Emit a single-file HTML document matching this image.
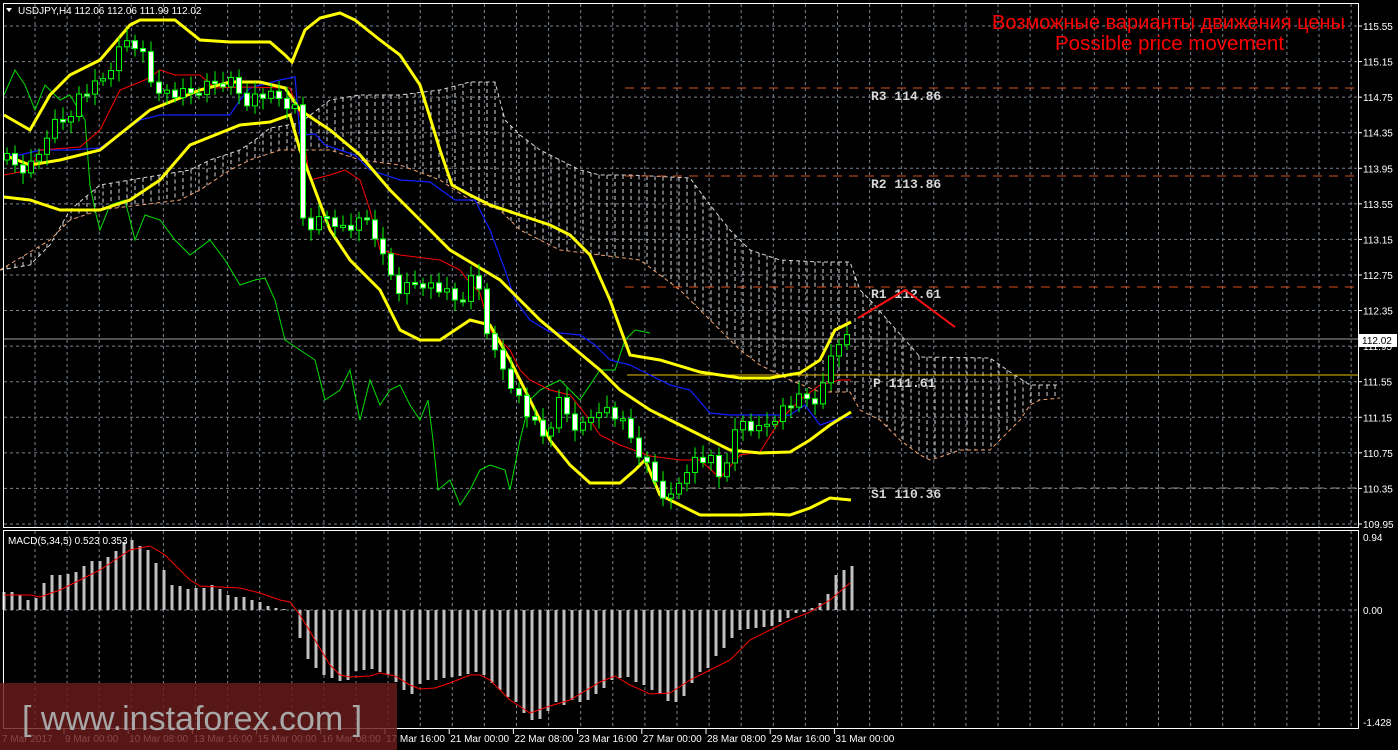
<!DOCTYPE html>
<html><head><meta charset="utf-8"><style>
html,body{margin:0;padding:0;background:#000;overflow:hidden}
svg{display:block}
text{font-family:"Liberation Sans",sans-serif}
text.mono{font-family:"Liberation Mono",monospace}
</style></head><body>
<svg id="s" width="1398" height="750" xmlns="http://www.w3.org/2000/svg">
<rect width="1398" height="750" fill="#000"/>
<g id="grid"></g>
<g id="cloud"></g>
<g id="levels">
<line x1="625" y1="88" x2="1358" y2="88" stroke="#d8501c" stroke-width="1" stroke-dasharray="9,7"/>
<line x1="625" y1="176" x2="1358" y2="176" stroke="#d8501c" stroke-width="1" stroke-dasharray="9,7"/>
<line x1="625" y1="287" x2="1358" y2="287" stroke="#d8501c" stroke-width="1" stroke-dasharray="9,7"/>
<line x1="627" y1="488" x2="1358" y2="488" stroke="#a08888" stroke-width="1" stroke-dasharray="9,7"/>
<line x1="627" y1="375" x2="1358" y2="375" stroke="#e8c000" stroke-width="1"/>
<line x1="3" y1="339" x2="1358" y2="339" stroke="#a0a0a0" stroke-width="1"/>
</g>
<g id="lines"></g>
<g id="candles"></g>
<g id="macd"></g>
<g font-size="13" font-weight="bold" fill="#d8d8d8">
<text class="mono" x="871" y="100">R3 114.86</text>
<text class="mono" x="871" y="188">R2 113.86</text>
<text class="mono" x="871" y="298">R1 112.61</text>
<text class="mono" x="873" y="387">P 111.61</text>
<text class="mono" x="871" y="498">S1 110.36</text>
</g>
<polyline points="858,318 905,290 955,327" fill="none" stroke="#ff1010" stroke-width="2"/>
<text x="992" y="29" font-size="20" fill="#ff0000">Возможные варианты движения цены</text>
<text x="1055" y="50" font-size="20.5" fill="#ff0000">Possible price movement</text>
<rect x="1359" y="0" width="39" height="750" fill="#000"/>
<g fill="none" stroke="#fff" stroke-width="1">
<rect x="3.5" y="3.5" width="1355" height="524"/>
<rect x="3.5" y="530.5" width="1355" height="198"/>
</g>
<g id="axis" font-size="10" fill="#fff"></g>
<rect x="1359" y="334" width="38" height="13" fill="#fff"/>
<text x="1362" y="344" font-size="10" fill="#000">112.02</text>
<text x="18" y="14" font-size="10" fill="#fff">USDJPY,H4  112.06 112.06 111.99 112.02</text>
<polygon points="6,8 12,8 9,12" fill="#fff"/>
<text x="8" y="544" font-size="10" fill="#fff">MACD(5,34,5) 0.523 0.353</text>
<rect x="0" y="683" width="397" height="67" fill="#6a1c1c" opacity="0.82"/>
<text x="22" y="730" font-size="34" fill="#a8a8a8">[  www.instaforex.com  ]</text>
</svg>
<script>
const NS="http://www.w3.org/2000/svg";
function el(p,t,a){const e=document.createElementNS(NS,t);for(const k in a)e.setAttribute(k,a[k]);document.getElementById(p).appendChild(e);return e;}
function interp(pts,x){if(x<=pts[0][0])return pts[0][1];for(let i=1;i<pts.length;i++){if(x<=pts[i][0]){const a=pts[i-1],b=pts[i];return a[1]+(b[1]-a[1])*(x-a[0])/(b[0]-a[0]);}}return pts[pts.length-1][1];}
function pl(p,pts,c,w,dash){const a={points:pts.map(q=>q.join(',')).join(' '),fill:'none',stroke:c,'stroke-width':w};if(dash)a['stroke-dasharray']=dash;el(p,'polyline',a);}
for(let x=35;x<1358;x+=32.1){el('grid','line',{x1:x,y1:4,x2:x,y2:527,stroke:'#7a8490','stroke-dasharray':'3,3'});el('grid','line',{x1:x,y1:531,x2:x,y2:728,stroke:'#7a8490','stroke-dasharray':'3,3'});}
for(let i=0;i<15;i++){const y=26+i*35.57;el('grid','line',{x1:4,y1:y,x2:1358,y2:y,stroke:'#7a8490','stroke-dasharray':'3,3'});}
el('grid','line',{x1:4,y1:610,x2:1358,y2:610,stroke:'#7a8490','stroke-dasharray':'3,3'});
const up=[[0,270],[30,265],[50,245],[70,210],[100,185],[130,180],[160,175],[190,170],[210,160],[240,150],[255,140],[270,128],[300,123],[330,100],[360,95],[400,95],[440,90],[470,82],[495,82],[505,120],[520,135],[540,150],[560,160],[580,170],[600,175],[630,175],[690,178],[710,205],[730,230],[750,250],[780,260],[820,262],[850,262],[860,290],[870,300],[920,357],[990,358],[1010,372],[1030,385],[1060,385]];
const lo=[[0,270],[50,240],[70,220],[100,210],[140,205],[180,200],[200,190],[230,170],[250,160],[280,150],[330,150],[360,160],[400,165],[440,180],[470,200],[500,210],[520,230],[560,250],[600,255],[640,260],[680,290],[700,310],[740,350],[760,365],[790,380],[820,392],[850,392],[860,410],[880,420],[900,440],[920,455],[930,460],[940,457],[960,450],[990,450],[1000,440],[1010,430],[1020,420],[1030,405],[1040,400],[1060,398]];
for(let x=7;x<=1060;x+=8){const a=interp(up,x),b=interp(lo,x);if(Math.abs(a-b)>3)el('cloud','line',{x1:x,y1:a,x2:x,y2:b,stroke:'#d8d8d8','stroke-dasharray':'4,3','stroke-width':1});}
pl('cloud',up,'#d8d8d8',1,'4,3');pl('cloud',lo,'#f0a070',1,'4,3');
const ub=[[4,115],[30,130],[50,95],[70,75],[100,60],[130,25],[140,20],[175,20],[200,40],[230,42],[270,42],[285,55],[292,62],[305,30],[320,18],[340,13],[355,20],[380,40],[400,55],[420,85],[440,150],[452,185],[470,195],[490,205],[520,215],[550,225],[570,235],[590,255],[610,300],[630,355],[660,360],[700,372],[740,378],[770,378],[800,373],[820,360],[835,330],[851,322]];
const mb=[[4,155],[30,165],[60,160],[100,150],[150,110],[200,90],[230,82],[260,82],[285,88],[300,110],[330,130],[360,155],[390,190],[420,220],[450,250],[470,262],[500,280],[520,300],[540,320],[570,345],[600,370],[620,390],[650,410],[680,425],[700,435],[730,450],[760,453],[790,452],[810,440],[830,425],[851,412]];
const lb=[[4,197],[30,200],[60,210],[100,210],[130,200],[160,180],[190,145],[210,137],[240,125],[270,122],[290,115],[300,150],[315,190],[330,230],[350,260],[380,290],[400,330],[420,340],[440,340],[455,330],[470,320],[490,325],[510,360],[530,400],[550,440],[570,465],[590,483],[620,483],[635,470],[645,460],[660,495],[680,505],[700,515],[740,515],[770,514],[790,515],[810,508],[830,498],[851,500]];
const green=[[4,95],[15,70],[25,85],[35,110],[45,85],[60,100],[70,95],[85,120],[90,185],[95,210],[100,230],[110,205],[125,200],[135,240],[145,215],[160,220],[175,240],[190,255],[210,240],[225,260],[240,285],[255,280],[265,278],[275,300],[285,340],[300,350],[315,360],[325,400],[340,390],[350,370],[360,420],[370,380],[380,405],[390,390],[400,385],[410,405],[420,420],[428,400],[433,440],[438,490],[450,480],[460,505],[470,490],[480,470],[490,465],[505,470],[510,490],[520,440],[530,400],[540,390],[550,385],[560,380],[575,395],[580,400],[600,370],[615,370],[625,340],[635,330],[650,333]];
const red=[[4,175],[30,170],[40,150],[80,147],[100,130],[120,90],[145,80],[160,70],[175,75],[200,75],[215,88],[245,87],[290,88],[300,115],[310,180],[330,175],[345,170],[360,180],[370,210],[380,250],[400,255],[440,260],[460,270],[470,283],[480,293],[490,330],[510,350],[520,370],[530,380],[550,390],[570,395],[590,420],[600,435],[620,445],[650,456],[680,460],[700,460],[720,478],[740,455],[760,452],[780,420],[800,400],[820,385],[840,380],[851,380]];
const blue=[[4,155],[20,155],[40,150],[70,150],[100,148],[140,120],[160,115],[230,115],[240,100],[250,88],[280,80],[295,77],[300,135],[315,134],[325,145],[340,150],[355,155],[370,170],[400,180],[430,182],[455,200],[475,200],[490,230],[505,270],[515,300],[530,320],[550,332],[580,335],[595,345],[610,360],[630,365],[650,375],[670,385],[690,390],[710,413],[730,415],[790,415],[805,405],[820,425],[840,418],[851,417]];
pl('lines',green,'#00e000',1);pl('lines',blue,'#1020ff',1.2);pl('lines',red,'#ff0000',1);
pl('lines',ub,'#ffff00',3);pl('lines',mb,'#ffff00',3);pl('lines',lb,'#ffff00',3);
const cl=[[7,160],[20,170],[35,165],[50,125],[65,120],[80,95],[100,85],[115,60],[125,40],[140,45],[150,80],[170,95],[190,95],[210,85],[230,80],[245,100],[260,95],[280,100],[295,110],[300,215],[310,225],[330,215],[345,230],[370,220],[385,265],[400,290],[420,280],[440,290],[460,305],[470,280],[480,290],[490,345],[510,380],[530,420],[545,440],[560,400],[570,420],[580,430],[600,405],[620,420],[640,455],[660,490],[670,500],[690,460],[710,460],[720,480],[740,420],[760,430],[780,410],[800,400],[820,400],[835,340],[851,338]];
let prev=interp(cl,0);
for(let i=0;i<=106;i++){const x=7+8*i;if(x>852)break;let c=interp(cl,x)+((i*37)%11-5)*1.3;const o=prev;prev=c;
const top=Math.min(o,c),bot=Math.max(o,c);const h=Math.max(bot-top,2);
el('candles','line',{x1:x,y1:top-6-(i%4)*2,x2:x,y2:bot+5+(i%3)*3,stroke:'#00ff00','stroke-width':1});
el('candles','rect',{x:x-2.5,y:top,width:5,height:h,fill:(c>o?'#fff':'#000'),stroke:'#00ff00','stroke-width':1});}
const mh={4:592,12:592,20:595,28:600,36:598,44:583,52:575,60:575,68:574,76:572,84:566,92:561,100:561,108:557,116:551,124:542,132:540,140:546,148:550,156:563,164:570,172:585,180:586,188:589,196:588,204:588,212:585,220:589,228:595,236:597,244:597,252:600,260:602,268:606,276:608,284:609,300:638,308:659,316:668,324:675,332:678,340:681,348:680,356:671,364:670,372:669,380:672,388:675,396:682,404:690,412:694,420:684,428:680,436:680,444:678,452:677,460:676,468:674,476:672,484:675,492:683,500:690,508:697,516:702,524:713,532:720,540:719,548:711,556:702,564:705,572:700,580:702,588:700,596:694,604:688,612:680,620:678,628:677,636:682,644:685,652:690,660:693,668:701,676:702,684:696,692:683,700:672,708:668,716:656,724:648,732:638,740:630,748:629,756:628,764:627,772:626,780:622,788:618,796:613,804:612,812:608,820:603,828:594,836:575,844:570,852:566};
for(const k in mh){const x=+k,y=mh[k];el('macd','rect',{x:x-1.5,y:Math.min(y,610),width:3,height:Math.max(Math.abs(y-610),1),fill:'#c0c0c0'});}
const sig=[[4,595],[30,595],[40,597],[60,590],[80,580],[100,570],[130,550],[150,546],[165,555],[190,580],[200,586],[240,588],[260,593],[280,600],[290,602],[300,615],[315,640],[330,665],[340,675],[350,677],[370,676],[380,673],[395,676],[410,685],[420,689],[435,688],[450,683],[470,675],[480,675],[490,680],[510,700],[530,713],[550,706],[570,700],[600,682],[615,676],[630,685],[650,694],[670,693],[690,680],[710,670],[730,660],[750,640],[770,630],[790,620],[810,612],[830,600],[850,583]];
pl('macd',sig,'#ff0000',1);
const pr=['115.55','115.15','114.75','114.35','113.95','113.55','113.15','112.75','112.35','111.95','111.55','111.15','110.75','110.35','109.95'];
pr.forEach((p,i)=>{const y=26+i*35.57;el('axis','line',{x1:1358,y1:y,x2:1362,y2:y,stroke:'#fff'});const t=el('axis','text',{x:1363,y:y+4});t.textContent=p;});
[['0.94',537],['0.00',610],['-1.428',722]].forEach(([p,y])=>{const t=el('axis','text',{x:1363,y:y+4});t.textContent=p;});
const tl=['7 Mar 2017','9 Mar 00:00','10 Mar 08:00','13 Mar 16:00','15 Mar 00:00','16 Mar 08:00','17 Mar 16:00','21 Mar 00:00','22 Mar 08:00','23 Mar 16:00','27 Mar 00:00','28 Mar 08:00','29 Mar 16:00','31 Mar 00:00'];
tl.forEach((s,i)=>{const x=i==0?2:66+64.2*(i-1)-1;const t=el('axis','text',{x:x,y:742});t.textContent=s;if(i>0)el('axis','line',{x1:x-1,y1:729,x2:x-1,y2:734,stroke:'#fff'});});
</script>
</body></html>
